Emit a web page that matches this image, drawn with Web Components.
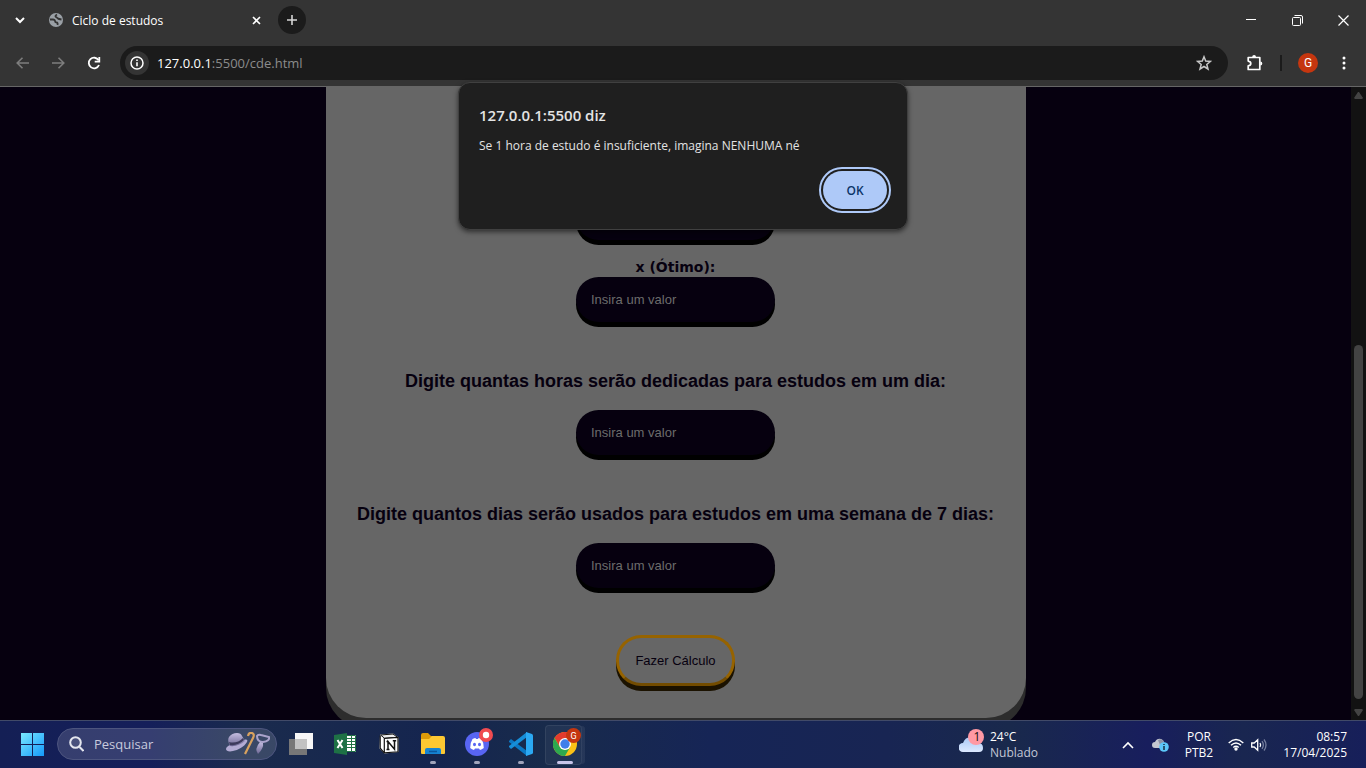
<!DOCTYPE html>
<html lang="pt-BR">
<head>
<meta charset="utf-8">
<title>Ciclo de estudos</title>
<style>
  html, body { height: 100%; margin: 0; }
  body { background: #06000f; font-family: "Open Sans", "Noto Sans", sans-serif; font-size: 12px; }
</style>
</head>
<body>
<desktop-screen></desktop-screen>

<template id="desktop-screen">
  <style>
    :host { display: flex; flex-direction: column; height: 100vh; min-height: 480px; overflow: hidden; }
    web-viewport { flex: 1; min-height: 0; }
    main { flex: 1; min-height: 0; display: flex; flex-direction: column; position: relative; }
    alert-dialog { position: absolute; top: -5px; left: 0; right: 0; }
  </style>
  <tab-strip></tab-strip>
  <nav-bar></nav-bar>
  <main>
    <web-viewport>
      <study-form>
        <study-field label="x (Bom):"></study-field>
        <study-field label="x (Ótimo):" hint="Insira um valor"></study-field>
        <study-field large label="Digite quantas horas serão dedicadas para estudos em um dia:" hint="Insira um valor"></study-field>
        <study-field large label="Digite quantos dias serão usados para estudos em uma semana de 7 dias:" hint="Insira um valor"></study-field>
        <calc-button>Fazer Cálculo</calc-button>
      </study-form>
    </web-viewport>
    <alert-dialog>
      <span slot="title">127.0.0.1:5500 diz</span>
      Se 1 hora de estudo é insuficiente, imagina NENHUMA né
    </alert-dialog>
  </main>
  <task-bar></task-bar>
</template>

<template id="tab-strip">
  <style>
    :host { display: flex; align-items: center; height: 40px; background: #343434; color: #fff; flex: none; }
    button { border: 0; padding: 0; background: none; color: inherit; display: grid; place-items: center; flex: none; }
    svg { display: block; fill: none; stroke: currentColor; }
    .list { width: 40px; height: 40px; }
    .tab { display: flex; align-items: center; width: 208px; padding-left: 8px; gap: 8px; box-sizing: border-box; }
    .tab span { flex: 1; font-size: 12px; line-height: 18px; padding-top: 2px; }
    .close { width: 16px; height: 16px; }
    .new { width: 28px; height: 28px; border-radius: 50%; background: #1b1b1b; margin-left: 14px; color: #d5d5d5; }
    .win { margin-left: auto; display: flex; }
    .win button { width: 46px; height: 40px; }
  </style>
  <button class="list" aria-label="Pesquisar guias"><svg width="10" height="8" viewBox="0 0 10 8" stroke-width="2"><path d="M1 2l4 4 4-4"/></svg></button>
  <div class="tab">
    <svg width="16" height="16" viewBox="0 0 16 16"><circle cx="8" cy="8" r="7" fill="#9aa0a6" stroke="none"/><path d="M2 7.500h3q2 0 2 1.500t1.500 1.500 1 2.500M9 2.500Q6.500 4 8 5t2 1.500 3.500 1" stroke="#343434" stroke-width="1.800"/></svg>
    <span>Ciclo de estudos</span>
  </div>
  <button class="close" aria-label="Fechar guia"><svg width="9" height="9" viewBox="0 0 9 9" stroke-width="1.600"><path d="M1 1l7 7M8 1L1 8"/></svg></button>
  <button class="new" aria-label="Nova guia"><svg width="12" height="12" viewBox="0 0 12 12" stroke-width="1.600"><path d="M6 1v10M1 6h10"/></svg></button>
  <div class="win">
    <button aria-label="Minimizar"><svg width="10" height="10" viewBox="0 0 10 10"><path d="M0 4.500h10"/></svg></button>
    <button aria-label="Restaurar"><svg width="11" height="11" viewBox="0 0 11 11"><rect x=".5" y="2.500" width="8" height="8" rx="1"/><path d="M2.500 .5H9q1.500 0 1.500 1.500v6.500"/></svg></button>
    <button aria-label="Fechar"><svg width="11" height="11" viewBox="0 0 11 11" stroke-width="1.200"><path d="M.5 .5l10 10M10.500 .5l-10 10"/></svg></button>
  </div>
</template>

<template id="nav-bar">
  <style>
    :host { display: flex; align-items: center; height: 46px; padding: 0 12px 0 4px; background: #343434; border-bottom: 1px solid #666; color: #fff; flex: none; }
    button { border: 0; padding: 0; background: none; color: inherit; display: grid; place-items: center; width: 36px; height: 34px; flex: none; }
    svg { display: block; fill: none; stroke: currentColor; }
    .off { color: #7d7d7d; }
    .omni { flex: 1; display: flex; align-items: center; height: 34px; border-radius: 17px; background: #1b1b1b; margin: 0 8px; }
    .omni .info { width: 24px; height: 24px; border-radius: 50%; background: #343434; margin: 0 8px 0 5px; }
    .url { flex: 1; font-size: 13px; line-height: 18px; color: #8c8c8c; outline: 0; white-space: nowrap; }
    .url b { color: #fff; font-weight: 400; }
    .star { width: 24px; margin-right: 12px; color: #c7c7c7; }
    i { width: 2px; height: 16px; background: #1b1b1b; margin: 0 8px; }
    .me { width: 20px; height: 20px; border-radius: 50%; background: #c5360f; font: 12px/20px Roboto, sans-serif; margin: 0 8px; }
    .menu { width: 20px; margin-left: 8px; }
  </style>
  <button class="off" aria-label="Voltar"><svg width="13" height="12" viewBox="0 0 13 12" stroke-width="1.600"><path d="M13 6H1M6.500 .7L1.200 6l5.300 5.300"/></svg></button>
  <button class="off" aria-label="Avançar"><svg width="13" height="12" viewBox="0 0 13 12" stroke-width="1.600"><path d="M0 6h12M6.500 .7L11.800 6l-5.300 5.300"/></svg></button>
  <button aria-label="Recarregar"><svg width="14" height="14" viewBox="0 0 14 14" stroke-width="1.800"><path d="M12 9a5.300 5.300 0 1 1-.4-4.800"/><path d="M12.300 1v4.600H7.700" stroke-width="1.800"/></svg></button>
  <div class="omni">
    <button class="info" aria-label="Ver informações do site"><svg width="14" height="14" viewBox="0 0 14 14" stroke-width="1.500"><circle cx="7" cy="7" r="6"/><path d="M7 6.300v4M7 3.500v1.500" stroke-width="1.600"/></svg></button>
    <div class="url" role="textbox" contenteditable="true" spellcheck="false" aria-label="Barra de endereço"><b>127.0.0.1</b>:5500/cde.html</div>
    <button class="star" aria-label="Adicionar aos favoritos"><svg width="16" height="16" viewBox="0 0 16 16" stroke-width="1.500"><path d="M8 1.800l1.700 4.300 4.700.3-3.600 3 1.200 4.600L8 11.500 4 14l1.200-4.600-3.600-3 4.700-.3z"/></svg></button>
  </div>
  <button aria-label="Extensões"><svg width="18" height="18" viewBox="0 0 18 18"><path d="M3.200 3.500h11.600v12H3.200v-3.600q2.600-.4 2.600-2.400T3.200 7.100z" stroke-width="1.700" stroke-linejoin="round"/><path d="M7.200 3a1.900 1.900 0 0 1 3.800 0zM15.300 7.500a2 2 0 0 1 0 4z" fill="currentColor" stroke="none"/></svg></button>
  <i></i>
  <button class="me" aria-label="Perfil">G</button>
  <button class="menu" aria-label="Menu"><svg width="4" height="14" viewBox="0 0 4 14"><g fill="currentColor" stroke="none"><circle cx="2" cy="2" r="1.500"/><circle cx="2" cy="7" r="1.500"/><circle cx="2" cy="12" r="1.500"/></g></svg></button>
</template>

<template id="web-viewport">
  <style>
    :host { display: flex; background: #06000f; overflow: hidden; }
    .page { flex: 1; display: flex; flex-direction: column; justify-content: flex-end; align-items: center; padding-bottom: 2px; }
    .bar { width: 15px; background: #121212; display: flex; flex-direction: column; align-items: center; justify-content: space-between; padding: 5px 0 4px; box-sizing: border-box; }
    .rail { flex: 1; width: 9px; display: flex; flex-direction: column; justify-content: flex-end; margin: 10px 0; }
    .thumb { height: 60%; border-radius: 5px; background: #434343; }
    svg { fill: #434343; display: block; }
  </style>
  <div class="page"><slot></slot></div>
  <div class="bar">
    <svg width="9" height="7"><path d="M4 0h1l4 6-1 1H1L0 6z"/></svg>
    <div class="rail"><div class="thumb"></div></div>
    <svg width="9" height="7"><path d="M4 7h1l4-6-1-1H1L0 1z"/></svg>
  </div>
</template>

<template id="study-form">
  <style>
    :host { display: block; width: 700px; max-width: 100%; flex: none; }
    form { display: flex; flex-direction: column; align-items: center; min-height: 800px; box-sizing: border-box; justify-content: flex-end; padding-bottom: 32px; background: #666; border-radius: 40px; box-shadow: 0 10px #2d2d2d; }
  </style>
  <form><slot></slot></form>
</template>

<template id="study-field">
  <style>
    :host { display: flex; flex-direction: column; align-items: center; padding-bottom: 17px; }
    :host([large]) { padding-top: 31px; }
    label { font: bold 14px/20px "DejaVu Sans", Verdana, sans-serif; color: #06000f; text-align: center; }
    :host([large]) label { font: bold 18px/22px "Liberation Sans", Arial, sans-serif; margin-bottom: 18px; }
    input { width: 199px; height: 45px; box-sizing: border-box; padding: 0 15px; border: 0; border-radius: 24px; background: #06000f; color: #999; font: 13px "Liberation Sans", Arial, sans-serif; box-shadow: 0 5px #000; outline: 0; }
    input::placeholder { color: #6c6c6c; opacity: 1; }
  </style>
  <label for="value"></label>
  <input id="value" type="text">
</template>

<template id="calc-button">
  <style>
    :host { display: block; padding-top: 30px; }
    button { display: block; width: 119px; height: 51px; padding: 0; border: 3px solid #966300; border-bottom-color: #734c00; border-radius: 25px; background: #666; color: #06000f; font: 13px "Liberation Sans", Arial, sans-serif; box-shadow: 0 5px #1b1200; white-space: nowrap; }
  </style>
  <button type="button"><slot></slot></button>
</template>

<template id="alert-dialog">
  <style>
    :host { display: block; }
    dialog { position: static; box-sizing: border-box; width: 450px; max-width: 100%; margin: 0 auto; padding: 21px 20px 20px; background: #1f1f1f; border: 1px solid #404040; border-radius: 12px; box-shadow: 0 2px 5px #0008; color: #e3e3e3; display: flex; flex-direction: column; }
    h1 { margin: 0 0 11px; font-size: 15px; line-height: 22px; font-weight: 600; }
    p { margin: 0 0 16px; font-size: 12px; line-height: 18px; }
    button { align-self: flex-end; width: 64px; height: 38px; border: 0; padding: 0; border-radius: 19px; background: #aec9f8; color: #0b3468; font: 600 12px "Open Sans", sans-serif; outline: 2px solid #aec9f8; outline-offset: 2px; }
  </style>
  <dialog open aria-labelledby="t">
    <h1 id="t"><slot name="title"></slot></h1>
    <p><slot></slot></p>
    <button type="button">OK</button>
  </dialog>
</template>

<template id="task-bar">
  <style>
    :host { display: flex; align-items: center; height: 48px; box-sizing: border-box; border-top: 1px solid #414a68; padding: 0 19px 0 10px; flex: none; color: #fff; font-size: 12px; line-height: 16px;
      background: linear-gradient(90deg, #141f55 0%, #151f5a 11%, #1a2b4d 18%, #15254f 32%, #182b4b 40%, #162556 52%, #182553 65%, #19294c 74%, #181e5d 84%, #192650 91%, #171f5a 100%); }
    button { border: 0; padding: 0; background: none; color: inherit; font: inherit; display: grid; place-items: center; flex: none; }
    svg { display: block; }
    .start { width: 44px; height: 44px; margin-right: 3px; }
    .search { display: flex; align-items: center; width: 220px; height: 32px; box-sizing: border-box; border: 1px solid #4d557f; border-radius: 16px; background: #ffffff24; padding: 0 6px 0 11px; gap: 10px; margin: 0 2px 2px 0; }
    .search input { flex: 1; min-width: 0; border: 0; padding: 0; background: none; outline: 0; font: 13px/18px "Open Sans", sans-serif; color: #fff; }
    .search input::placeholder { color: #c8cbdd; opacity: 1; }
    .weather { display: flex; gap: 6px; text-align: left; margin-left: auto; margin-right: 76px; }
    .weather svg { margin-top: -8px; }
    .weather small { display: block; font-size: 12px; color: #c3c7d6; }
    .tray { display: flex; align-items: center; gap: 4px; }
    .tray button { height: 40px; }
    .tiny { width: 28px; }
    .lang { width: 42px; }
    .net { width: 46px; grid-template-columns: 16px 16px; justify-content: center; gap: 7px; }
    .clock { width: 73px; text-align: right; justify-items: end; }
  </style>
  <button class="start" aria-label="Iniciar"><svg width="23" height="23" viewBox="0 0 23 23"><defs><linearGradient id="w" x1="0" y1="0" x2="23" y2="23" gradientUnits="userSpaceOnUse"><stop stop-color="#7ae9ff"/><stop offset="1" stop-color="#1499fa"/></linearGradient></defs><path fill="url(#w)" d="M0 0h11v11H0zM12 0h11v11H12zM0 12h11v11H0zM12 12h11v11H12z"/></svg></button>
  <div class="search">
    <svg width="15" height="16" viewBox="0 0 15 16" fill="#ffffff18" stroke="#e4e6ee" stroke-width="2"><circle cx="6.500" cy="6.500" r="5.300"/><path d="M10.500 11l4 4"/></svg>
    <input type="text" placeholder="Pesquisar" aria-label="Pesquisar">
    <svg width="44" height="24" viewBox="0 0 44 24"><defs><linearGradient id="h" x1="0" y1="0" x2="0" y2="1"><stop stop-color="#c4bde0"/><stop offset="1" stop-color="#6d6794"/></linearGradient></defs>
      <path fill="#b3abd4" d="M0 17c0-2 2-3 4-4l14-5c3-1 4 0 3 2-3 5-9 8-14 9-4 1-7 0-7-2z"/>
      <path fill="url(#h)" d="M4 14Q1 8 3 5q3-4 8-4 4 0 5 3l3 5q-7 6-15 5z"/><path d="M3 10q8 2 14-4l1 2q-6 6-14 5z" fill="#3d3a5d"/>
      <path d="M19 22L27 6q2-4-1-5t-4 3" fill="none" stroke="#d9a25e" stroke-width="2.200"/>
      <path d="M31 4q1-2 4-1 4 1 8 2 1 4-6 5-6 0-6-6z" fill="none" stroke="#aaa3cb" stroke-width="2"/><path d="M34 10l3 1q1 5-5 11-4-5 2-12z" fill="url(#h)"/></svg>
  </div>
  <task-icon name="Visão de tarefas"><svg width="24" height="22" viewBox="0 0 24 22"><path fill="#777" d="M0 6h18v16H0z"/><path fill="#f7f7f7" d="M6 0h18v16H6z"/><path fill="#c2c2c2" d="M6 6h12v10H6z"/></svg></task-icon>
  <task-icon name="Excel"><svg width="22" height="22" viewBox="0 0 22 22"><path fill="#fff" d="M11 2h11v17H11z"/><path stroke="#217346" fill="none" d="M12 2.500h9.500v16H12M13 5.500h8M13 8.500h8M13 11.500h8M13 14.500h8M17.500 3v15"/><path fill="#1e7145" d="M0 2l13-2v22L0 20z"/><path d="M3.500 7l5 8M8.500 7l-5 8" stroke="#fff" stroke-width="2"/></svg></task-icon>
  <task-icon name="Notion"><svg width="20" height="21" viewBox="0 0 20 21"><path fill="#fff" d="M1 1.500L14 .5l5.500 4v14.500L5.500 20.500l-5-5z"/><path d="M1.500 2L14 1l4.500 3.300L5.500 5.200z" fill="#eee" stroke="#111" stroke-width="1"/><path d="M1.200 2.500v12.700l4 4.600M5.300 5.500v14.300L19 18.800V4.500z" fill="#fff" stroke="#111" stroke-width="1.200"/><path d="M9 16.300V8.500l6.500 7.700V8M7.500 8.500h2.300M13.800 7.800h3.400M7.500 16.500h3" fill="none" stroke="#111" stroke-width="1.500"/></svg></task-icon>
  <task-icon name="Explorador de Arquivos" running><svg width="24" height="22" viewBox="0 0 24 22"><path fill="#dc9a09" d="M0 2q0-2 2-2h5l3 3h12v5H0z"/><path fill="#fdc832" d="M0 6h8l3-3h11q2 0 2 2v15q0 1-1 1H1q-1 0-1-1z"/><path fill="#1683d2" d="M4 21v-4q0-2 2-2h12q2 0 2 2v4z"/><path d="M8 18.500h8" stroke="#0a569e" stroke-width="1.500"/></svg></task-icon>
  <task-icon name="Discord" running><svg width="24" height="24" viewBox="0 0 24 24"><circle cx="12" cy="12" r="12" fill="#5865f2"/><path fill="#fff" d="M7.500 7q2-1 3-1l.5 1h2l.5-1q1 0 3 1 2.500 4 2.300 9-2 1.600-3.800 2l-1-1.600q-2 .4-4 0L9 18q-2-.4-3.800-2Q5 11 7.500 7z"/><ellipse cx="9.500" cy="12.500" rx="1.500" ry="1.700" fill="#5865f2"/><ellipse cx="14.500" cy="12.500" rx="1.500" ry="1.700" fill="#5865f2"/></svg>
    <svg slot="badge" width="14" height="14" viewBox="0 0 14 14"><circle cx="7" cy="7" r="7" fill="#f04b50"/><circle cx="7" cy="7" r="3.200" fill="#fff"/></svg></task-icon>
  <task-icon name="Visual Studio Code" running><svg width="24" height="24" viewBox="0 0 24 24"><path fill="#0b78c4" d="M0 9l2-2 16 12v5L0 10z"/><path fill="#168ed8" d="M0 15l2 2L18 5V0L0 14z"/><path fill="#2ba9f3" d="M17 0l6 2q1 .5 1 1.500v17q0 1-1 1.500l-6 2z"/></svg></task-icon>
  <task-icon name="Google Chrome" running active><svg width="24" height="24" viewBox="0 0 24 24"><circle cx="12" cy="12" r="12" fill="#fbc116"/><path fill="#e33b2e" d="M1.600 6A12 12 0 0 1 22.400 6H12L6.800 15z"/><path fill="#2da94f" d="M1.600 6A12 12 0 0 0 12 24l5.200-9-5.200 3-5.200-3z"/><circle cx="12" cy="12" r="6" fill="#fff"/><circle cx="12" cy="12" r="4.700" fill="#3f7feb"/></svg>
    <svg slot="badge" width="15" height="15" viewBox="0 0 15 15"><circle cx="7.500" cy="7.500" r="7.500" fill="#c5360f"/><text x="7.500" y="11" font-family="Roboto, sans-serif" font-size="9" fill="#fff" text-anchor="middle">G</text></svg></task-icon>
  <button class="weather">
    <svg width="25" height="24" viewBox="0 0 25 24"><defs><linearGradient id="c" x1="0" y1="0" x2="0" y2="1"><stop stop-color="#a9c8f5"/><stop offset="1" stop-color="#dce9ff"/></linearGradient></defs><path fill="url(#c)" d="M4 23a4.500 4.500 0 0 1 0-9q2-6 8-6t7 6q5 0 5 5 0 4-4 4z"/><circle cx="17" cy="8" r="8" fill="#ff99a4"/><text x="18" y="12" font-family="Open Sans, sans-serif" font-size="12" fill="#111" text-anchor="middle">1</text></svg>
    <span>24°C<small>Nublado</small></span>
  </button>
  <div class="tray">
    <button class="tiny" aria-label="Mostrar ícones ocultos"><svg width="12" height="8" viewBox="0 0 12 8" fill="none" stroke="#fff" stroke-width="1.600"><path d="M1 7l5-5 5 5"/></svg></button>
    <button class="tiny" aria-label="OneDrive"><svg width="17" height="14" viewBox="0 0 17 14"><path fill="#c5c7d0" d="M3 10a3 3 0 0 1 0-6Q5 0 9 1q3 1 3 4l2 5z"/><path fill="#8d92a5" d="M6 2q4-2 6 2l1 2-5 1z"/><circle cx="12" cy="9" r="4.800" fill="#5cc7fa"/><path d="M12 8v4M12 6v1" stroke="#123" stroke-width="1.400"/></svg></button>
    <button class="lang"><span>POR<br>PTB2</span></button>
    <button class="net" aria-label="Rede e volume">
      <svg width="16" height="13" viewBox="0 0 16 13" fill="none" stroke="#fff" stroke-width="1.400"><path d="M.7 5q7.300-7 14.600 0M3 7.300q5-4.800 10 0M5.300 9.500q2.700-2.500 5.400 0"/><circle cx="8" cy="11" r="1" fill="#fff"/></svg>
      <svg width="16" height="14" viewBox="0 0 16 14" fill="none" stroke="#fff" stroke-width="1.300"><path d="M.7 5v4h2.500l3.500 3.300V1.700L3.200 5zM9 5q1.300 2 0 4"/><path d="M11 3.200q2.700 3.800 0 7.600M13 1.500q4 5.500 0 11" stroke="#747d9d"/></svg>
    </button>
    <button class="clock"><span>08:57<br>17/04/2025</span></button>
  </div>
</template>

<template id="task-icon">
  <style>
    :host { display: block; width: 44px; height: 46px; flex: none; }
    button { position: relative; width: 44px; height: 44px; border: 0; padding: 0; background: none; display: grid; place-items: center; }
    :host([active]) button::before { content: ""; position: absolute; inset: 3px 5px 1px 2px; background: #ffffff0c; border: 1px solid #ffffff12; border-radius: 4px; box-shadow: 4px 0 0 -1px #ffffff10; }
    ::slotted(svg) { display: block; position: relative; }
    ::slotted([slot="badge"]) { position: absolute; top: 6px; right: 6px; }
    :host([running]) button::after { content: ""; position: absolute; bottom: 2px; left: 19px; width: 6px; height: 3px; border-radius: 2px; background: #a0a4bb; }
    :host([active]) button::after { left: 14px; width: 16px; background: #c8c5ea; }
  </style>
  <button type="button"><slot></slot><slot name="badge"></slot></button>
</template>

<script>
  class TemplateElement extends HTMLElement {
    constructor() {
      super();
      const template = document.getElementById(this.localName);
      this.attachShadow({ mode: "open" }).append(template.content.cloneNode(true));
    }
  }

  class StudyField extends TemplateElement {
    connectedCallback() {
      this.shadowRoot.querySelector("label").textContent = this.getAttribute("label");
      this.shadowRoot.querySelector("input").placeholder = this.getAttribute("hint") || "";
    }
  }

  class TaskIcon extends TemplateElement {
    connectedCallback() {
      this.shadowRoot.querySelector("button").setAttribute("aria-label", this.getAttribute("name"));
    }
  }

  customElements.define("study-field", StudyField);
  customElements.define("task-icon", TaskIcon);
  for (const name of ["tab-strip", "nav-bar", "web-viewport", "study-form", "calc-button", "alert-dialog", "task-bar", "desktop-screen"]) {
    customElements.define(name, class extends TemplateElement {});
  }
</script>
</body>
</html>
